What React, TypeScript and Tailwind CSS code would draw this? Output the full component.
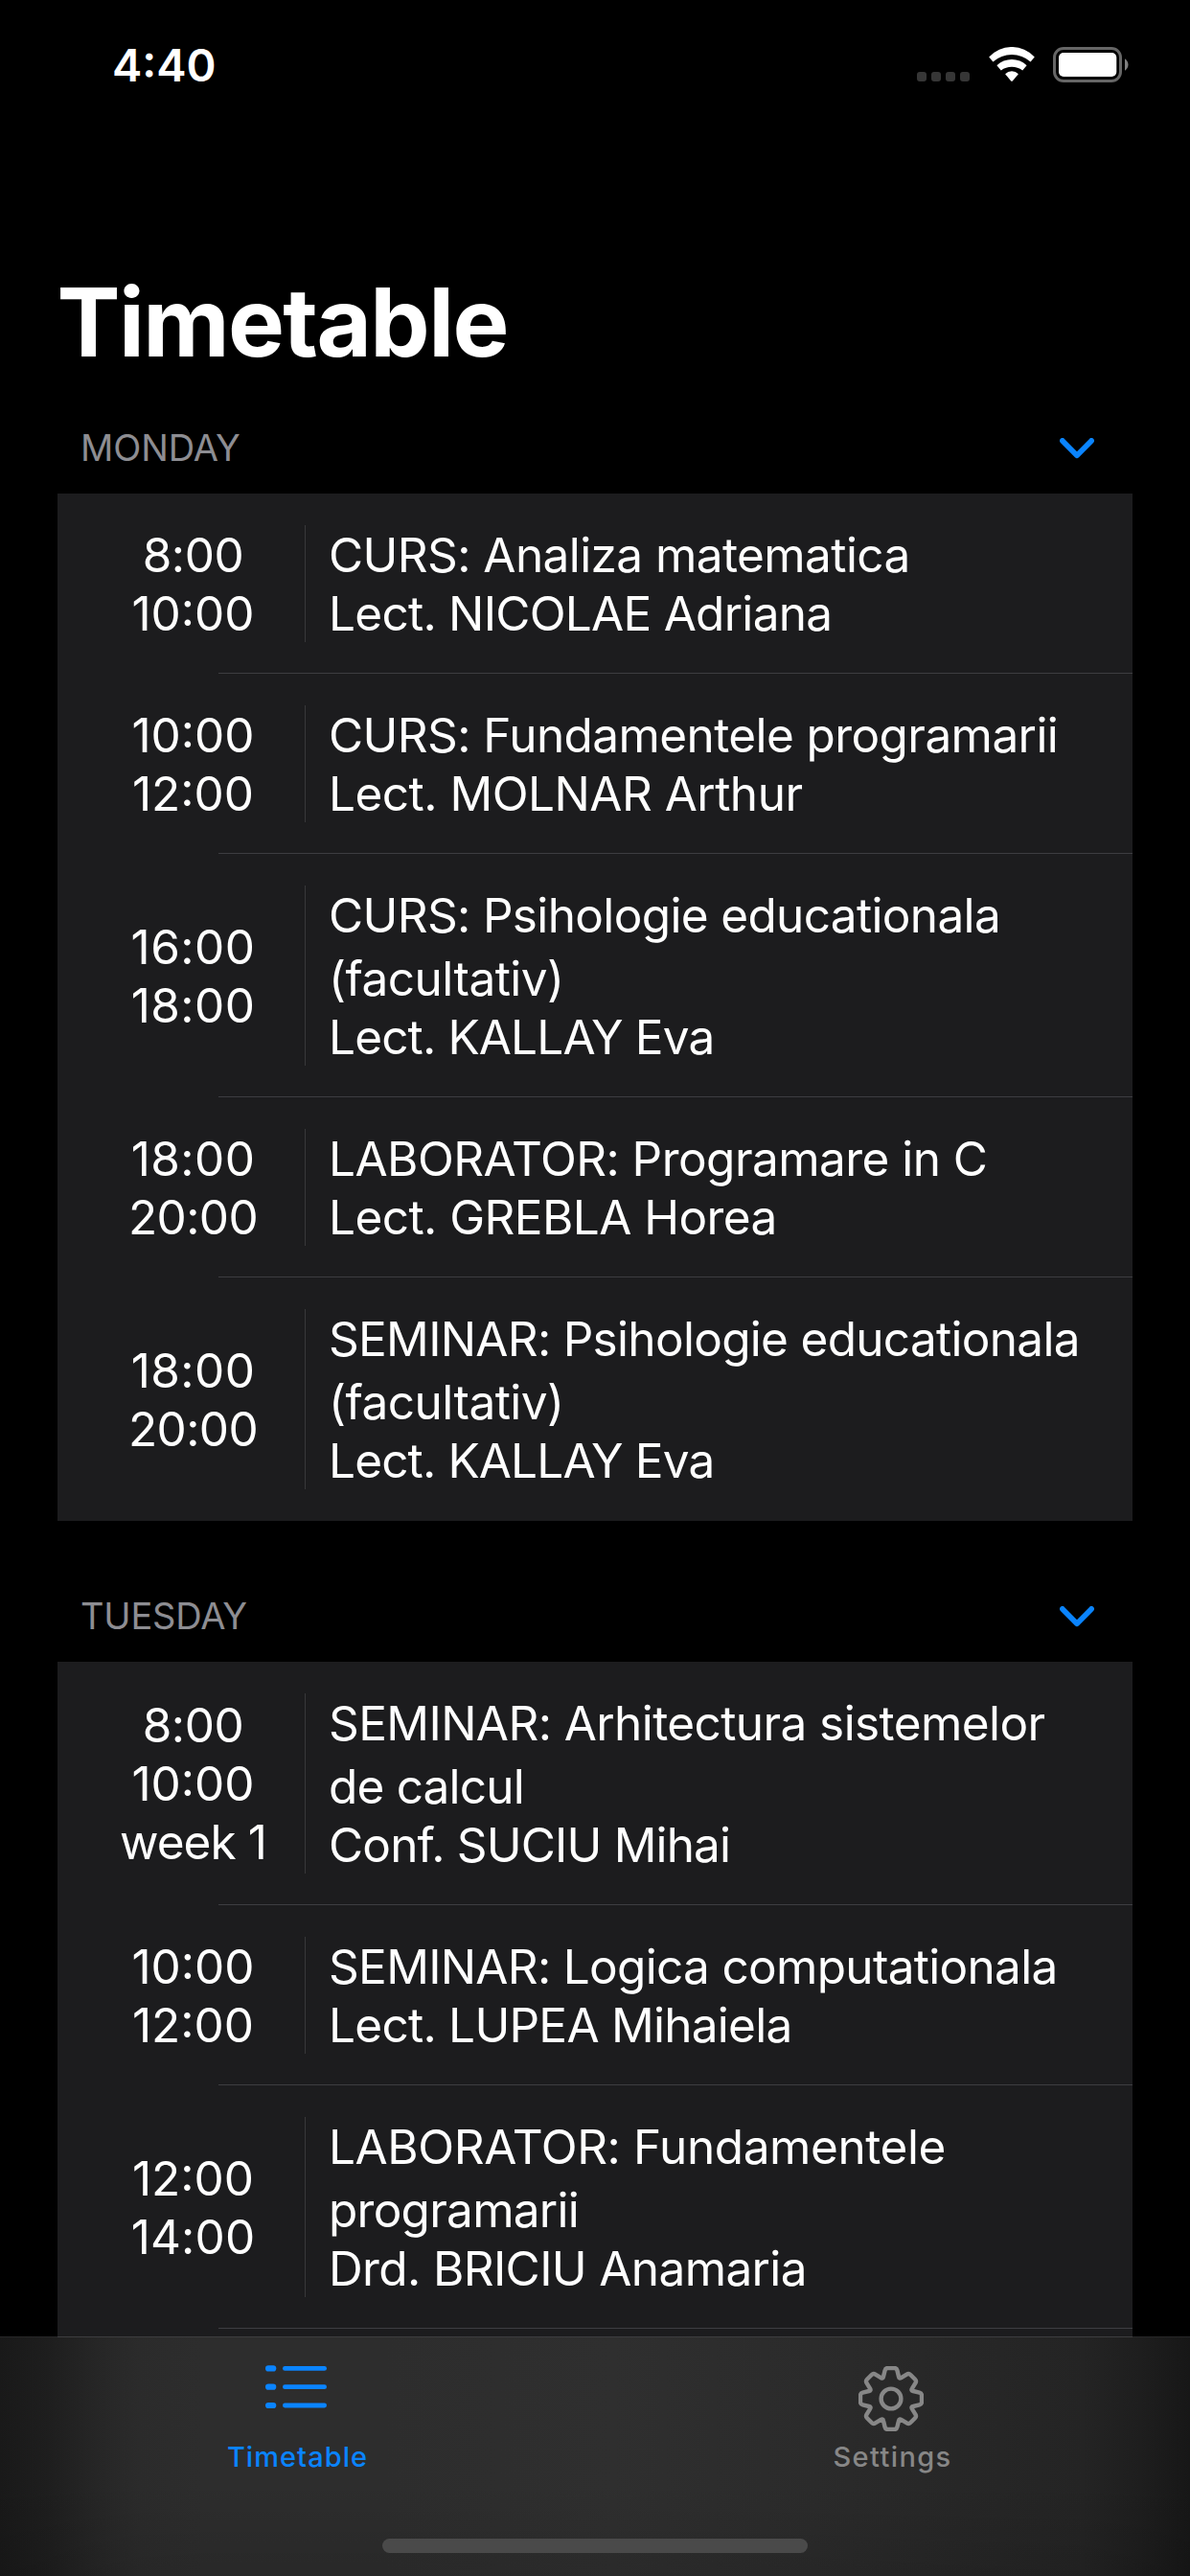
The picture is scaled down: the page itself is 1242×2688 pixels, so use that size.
import React from 'react';

type Line = { text: string; tracking?: string; wrapped?: boolean };
type Entry = { times: Line[]; details: Line[] };
type Day = { name: string; tracking: string; header: string; entries: Entry[]; continues?: boolean };

const t8: Line = { text: '8:00', tracking: 'tracking-[-0.4px]' };
const t10: Line = { text: '10:00' };
const t12: Line = { text: '12:00' };
const t14: Line = { text: '14:00', tracking: 'tracking-[0.15px]' };
const t16: Line = { text: '16:00', tracking: 'tracking-[0.45px]' };
const t18: Line = { text: '18:00', tracking: 'tracking-[0.45px]' };
const t20: Line = { text: '20:00', tracking: 'tracking-[-0.6px]' };

const days: Day[] = [
  {
    name: 'MONDAY',
    tracking: 'tracking-[-0.1px]',
    header: 'h-[119px]',
    entries: [
      {
        times: [t8, t10],
        details: [
          { text: 'CURS: Analiza matematica', tracking: 'tracking-[-0.58px]' },
          { text: 'Lect. NICOLAE Adriana', tracking: 'tracking-[-0.73px]' },
        ],
      },
      {
        times: [t10, t12],
        details: [
          { text: 'CURS: Fundamentele programarii', tracking: 'tracking-[-0.59px]' },
          { text: 'Lect. MOLNAR Arthur', tracking: 'tracking-[-0.51px]' },
        ],
      },
      {
        times: [t16, t18],
        details: [
          { text: 'CURS: Psihologie educationala', tracking: 'tracking-[-0.65px]' },
          { text: '(facultativ)', tracking: 'tracking-[-0.53px]', wrapped: true },
          { text: 'Lect. KALLAY Eva', tracking: 'tracking-[-0.85px]' },
        ],
      },
      {
        times: [t18, t20],
        details: [
          { text: 'LABORATOR: Programare in C', tracking: 'tracking-[-0.54px]' },
          { text: 'Lect. GREBLA Horea', tracking: 'tracking-[-0.56px]' },
        ],
      },
      {
        times: [t18, t20],
        details: [
          { text: 'SEMINAR: Psihologie educationala', tracking: 'tracking-[-0.7px]' },
          { text: '(facultativ)', tracking: 'tracking-[-0.53px]', wrapped: true },
          { text: 'Lect. KALLAY Eva', tracking: 'tracking-[-0.85px]' },
        ],
      },
    ],
  },
  {
    name: 'TUESDAY',
    tracking: 'tracking-[-0.2px]',
    header: 'h-[147px]',
    continues: true,
    entries: [
      {
        times: [t8, t10, { text: 'week 1', tracking: 'tracking-[-0.9px]' }],
        details: [
          { text: 'SEMINAR: Arhitectura sistemelor', tracking: 'tracking-[-0.59px]' },
          { text: 'de calcul', tracking: 'tracking-[-0.81px]', wrapped: true },
          { text: 'Conf. SUCIU Mihai', tracking: 'tracking-[-0.83px]' },
        ],
      },
      {
        times: [t10, t12],
        details: [
          { text: 'SEMINAR: Logica computationala', tracking: 'tracking-[-0.69px]' },
          { text: 'Lect. LUPEA Mihaiela', tracking: 'tracking-[-0.73px]' },
        ],
      },
      {
        times: [t12, t14],
        details: [
          { text: 'LABORATOR: Fundamentele', tracking: 'tracking-[-0.42px]' },
          { text: 'programarii', tracking: 'tracking-[-0.74px]', wrapped: true },
          { text: 'Drd. BRICIU Anamaria', tracking: 'tracking-[-0.62px]' },
        ],
      },
    ],
  },
];

function TextLine({ line }: { line: Line }) {
  return (
    <div
      className={`-mb-px whitespace-nowrap leading-[62px] ${line.tracking ?? ''} ${line.wrapped ? 'mt-[5px]' : ''}`}
    >
      {line.text}
    </div>
  );
}

function Row({ entry, separator }: { entry: Entry; separator: boolean }) {
  return (
    <div>
      <div className={`flex items-stretch pt-[33px] pl-[25px] text-[49.5px] text-white ${separator ? 'pb-[32px]' : 'pb-[33px]'}`}>
        <div className={`flex w-[233px] flex-col justify-center text-center ${entry.times.length > 2 ? '-mt-px' : ''}`}>
          {entry.times.map((l) => (
            <TextLine key={l.text} line={l} />
          ))}
        </div>
        <div className="w-px shrink-0 bg-[#38383a]" />
        <div className="ml-[24px] flex flex-col">
          {entry.details.map((l) => (
            <TextLine key={l.text} line={l} />
          ))}
        </div>
      </div>
      {separator && <div className="ml-[168px] h-px bg-[#3d3d41]" />}
    </div>
  );
}

function Chevron() {
  return (
    <svg width="36" height="22" viewBox="0 0 36 22" fill="none" className="mb-[36px]">
      <path
        d="M2.9 2.9L18 18.2L33.1 2.9"
        stroke="#0a84ff"
        strokeWidth="5.7"
        strokeLinecap="round"
        strokeLinejoin="round"
      />
    </svg>
  );
}

function StatusBar() {
  return (
    <div className="flex h-[132px] items-start justify-between pr-[63px] pl-[117px]">
      <div className="mt-[39px] text-[47px] leading-[57px] font-semibold text-white">4:40</div>
      <div className="mt-[49px] flex h-[37px] items-start">
        <div className="mt-[26px] flex gap-[5px]">
          <div className="size-[10px] rounded-[3px] bg-[#363636]" />
          <div className="size-[10px] rounded-[3px] bg-[#363636]" />
          <div className="size-[10px] rounded-[3px] bg-[#363636]" />
          <div className="size-[10px] rounded-[3px] bg-[#363636]" />
        </div>
        <svg width="48" height="37" viewBox="-24 0 48 37" fill="#fff" className="ml-[19.5px]">
          <path d="M-23.8 10.4A32.4 32.4 0 0 1 23.8 10.4L19.6 15.4A29.7 29.7 0 0 0 -19.6 15.4Z" />
          <path d="M-15.6 19.2A22.7 22.7 0 0 1 15.6 19.2L11.2 24.6A18.7 18.7 0 0 0 -11.2 24.6Z" />
          <path d="M-6.9 28.3A9.4 9.4 0 0 1 6.9 28.3L.8 35.4Q0 36.2 -.8 35.4Z" />
        </svg>
        <svg width="80" height="37" viewBox="0 0 80 37" className="ml-[19.5px]">
          <rect x="1.5" y="1.5" width="69" height="34" rx="9.5" fill="none" stroke="#666" strokeWidth="3" />
          <rect x="6" y="6" width="60.3" height="25" rx="5" fill="#fff" />
          <path d="M75 12.2A7.4 7.4 0 0 1 75 24.8Z" fill="#808080" />
        </svg>
      </div>
    </div>
  );
}

function ListIcon() {
  return (
    <svg width="66" height="68" viewBox="0 0 66 68" fill="#0a84ff" className="overflow-visible">
      {[2.4, 21.7, 41].map((y) => (
        <g key={y}>
          <rect x="1" y={y - 3.1} width="11.3" height="6.2" rx="3.1" />
          <rect x="19" y={y - 2.4} width="46" height="4.8" rx="2.4" />
        </g>
      ))}
    </svg>
  );
}

function GearIcon() {
  const rotate = (x: number, y: number, i: number) => {
    const a = (i * Math.PI) / 4;
    const px = x * Math.cos(a) - y * Math.sin(a);
    const py = x * Math.sin(a) + y * Math.cos(a);
    return `${px.toFixed(2)} ${py.toFixed(2)}`;
  };
  let d = '';
  for (let i = 0; i < 8; i++) {
    d += `${i === 0 ? 'M' : 'L'}${rotate(-8, -23, i)}`;
    d += `L${rotate(-6.4, -29.6, i)}Q${rotate(-5.8, -32, i)} ${rotate(-3.4, -32, i)}`;
    d += `L${rotate(3.4, -32, i)}Q${rotate(5.8, -32, i)} ${rotate(6.4, -29.6, i)}`;
    d += `L${rotate(8, -23, i)}Q${rotate(8.5, -20.6, i)} ${rotate(-8, -23, i + 1)}`;
  }
  return (
    <svg width="68" height="68" viewBox="-34 -34 68 68" fill="none" stroke="#878787" strokeWidth="4.4">
      <path d={d + 'Z'} strokeLinejoin="round" />
      <circle r="10.4" />
    </svg>
  );
}

export default function App() {
  return (
    <div className="flex h-[2688px] w-[1242px] flex-col overflow-hidden bg-black font-[Inter,'Liberation_Sans',sans-serif]">
      <main className="h-[2438px] shrink-0 overflow-hidden">
        <StatusBar />
        <h1 className="mt-[144px] pl-[59.5px] text-[99px] leading-[120px] font-bold tracking-[-1.6px] text-white">
          Timetable
        </h1>
        {days.map((day) => (
          <section key={day.name} className="mx-[60px]">
            <div className={`flex items-end justify-between pr-[40px] pl-[24px] ${day.header}`}>
              <h2 className={`mb-[25px] text-[38px] leading-[46px] text-[#8d8d92] ${day.tracking}`}>{day.name}</h2>
              <Chevron />
            </div>
            <div className={`bg-[#1c1c1e] ${day.continues ? 'pb-2' : ''}`}>
              {day.entries.map((e, i) => (
                <Row key={i} entry={e} separator={day.continues || i < day.entries.length - 1} />
              ))}
            </div>
          </section>
        ))}
      </main>
      <nav className="flex h-[250px] shrink-0 flex-col bg-[linear-gradient(to_bottom,rgba(0,0,0,0)_60%,rgba(0,0,0,0.1)),linear-gradient(to_right,#191919_0px,#1e1e1e_50px,#262626_100px,#2b2b2b_145px,#2d2d2d_210px,#2d2d2d_400px,#2f2f2f_640px,#2b2b2b_850px,#272727_1000px,#242424_1130px,#1e1e1e_1190px,#171717_1242px)]">
        <div className="h-px bg-[linear-gradient(to_right,#272728_60px,#3d3d3f_60px,#3d3d3f_1182px,#272728_1182px)]" />
        <div className="flex h-[210px] pt-[30px] text-[29px] leading-[35px] font-medium">
          <div className="flex w-[621px] flex-col items-center gap-[9px] pr-[3px] text-[#0a84ff]">
            <ListIcon />
            <span className="pl-[3px] tracking-[1.05px]">Timetable</span>
          </div>
          <div className="flex w-[621px] flex-col items-center gap-[9px] pr-[3px] text-[#878787]">
            <GearIcon />
            <span className="pl-[3px] tracking-[1.4px]">Settings</span>
          </div>
        </div>
        <div className="mx-auto h-[15px] w-[444px] rounded-full bg-[#4a4a4a]" />
      </nav>
    </div>
  );
}
